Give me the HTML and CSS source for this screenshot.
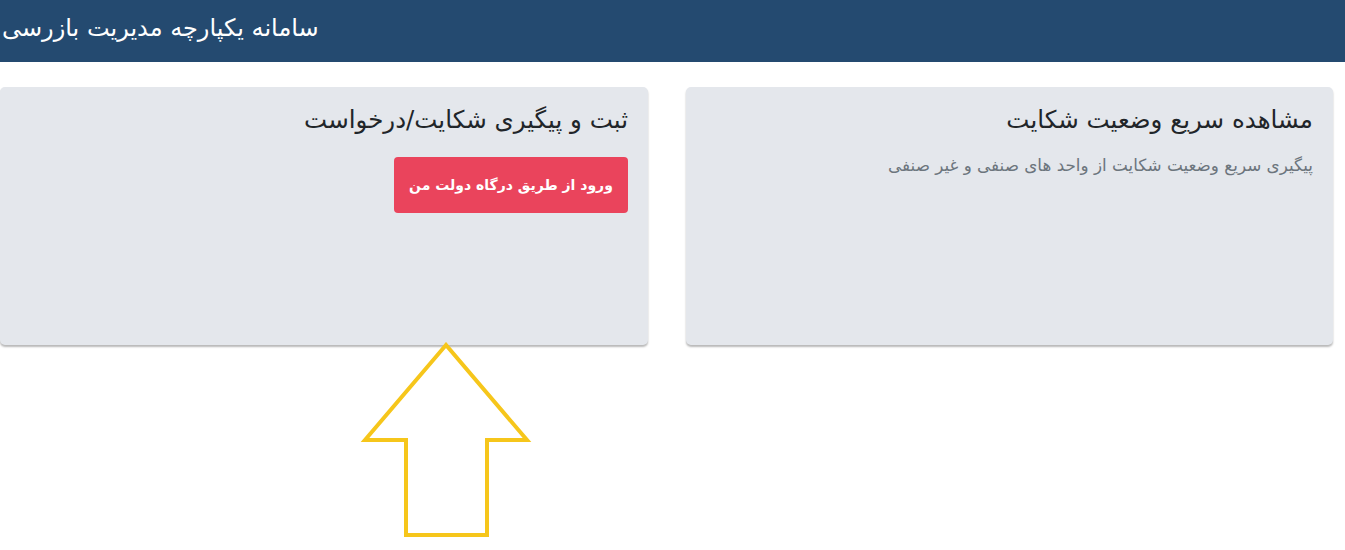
FILE: index.html
```html
<!DOCTYPE html>
<html lang="fa">
<head>
<meta charset="utf-8">
<title>سامانه یکپارچه مدیریت بازرسی</title>
<link rel="stylesheet" href="styles.css">
</head>
<body>
<header class="topbar">
  <div class="brand">سامانه یکپارچه مدیریت بازرسی</div>
</header>
<main class="cards">
  <section class="card">
    <h2 class="card-title">مشاهده سریع وضعیت شکایت</h2>
    <p class="card-text">پیگیری سریع وضعیت شکایت از واحد های صنفی و غیر صنفی</p>
  </section>
  <section class="card">
    <h2 class="card-title">ثبت و پیگیری شکایت/درخواست</h2>
    <button class="btn-login">ورود از طریق درگاه دولت من</button>
  </section>
</main>
<svg class="arrow" width="180" height="210" viewBox="0 0 180 210">
  <polygon points="86,3 5,98 46,98 46,193 127,193 127,98 167,98" fill="none" stroke="#f6c61b" stroke-width="4" stroke-linejoin="miter"/>
</svg>
</body>
</html>
```
FILE: styles.css
```css
html, body {
  margin: 0;
  padding: 0;
  background: #ffffff;
  font-family: "DejaVu Sans", "Noto Sans", sans-serif;
}
body {
  position: relative;
  width: 1345px;
  height: 550px;
  overflow: hidden;
}
.topbar {
  height: 62px;
  background: #244a70;
  display: flex;
  align-items: center;
  direction: ltr;
  padding: 0 0 6px 2px;
  box-sizing: border-box;
}
.brand {
  direction: rtl;
  color: #ffffff;
  font-size: 24px;
}
.cards {
  direction: rtl;
  display: grid;
  grid-template-columns: 647px 648px;
  column-gap: 38px;
  padding: 25px 12px 0 0;
  justify-content: start;
}
.card {
  background: #e4e7ec;
  border-radius: 5px;
  height: 258px;
  box-sizing: border-box;
  padding: 16px 20px 0 20px;
  box-shadow: 0 2px 2px rgba(0, 0, 0, 0.28);
}
.card-title {
  margin: 0;
  font-weight: normal;
  font-size: 24.5px;
  color: #212529;
  line-height: 34px;
}
.card-text {
  margin: 18px 0 0 0;
  font-size: 16.8px;
  color: #6c757d;
}
.btn-login {
  display: block;
  margin-top: 20px;
  width: 234px;
  height: 56px;
  border: none;
  border-radius: 4px;
  background: #ea445c;
  color: #ffffff;
  font-family: "DejaVu Sans", sans-serif;
  font-weight: bold;
  font-size: 14px;
  direction: rtl;
}
.arrow {
  position: absolute;
  left: 360px;
  top: 342px;
}
```
